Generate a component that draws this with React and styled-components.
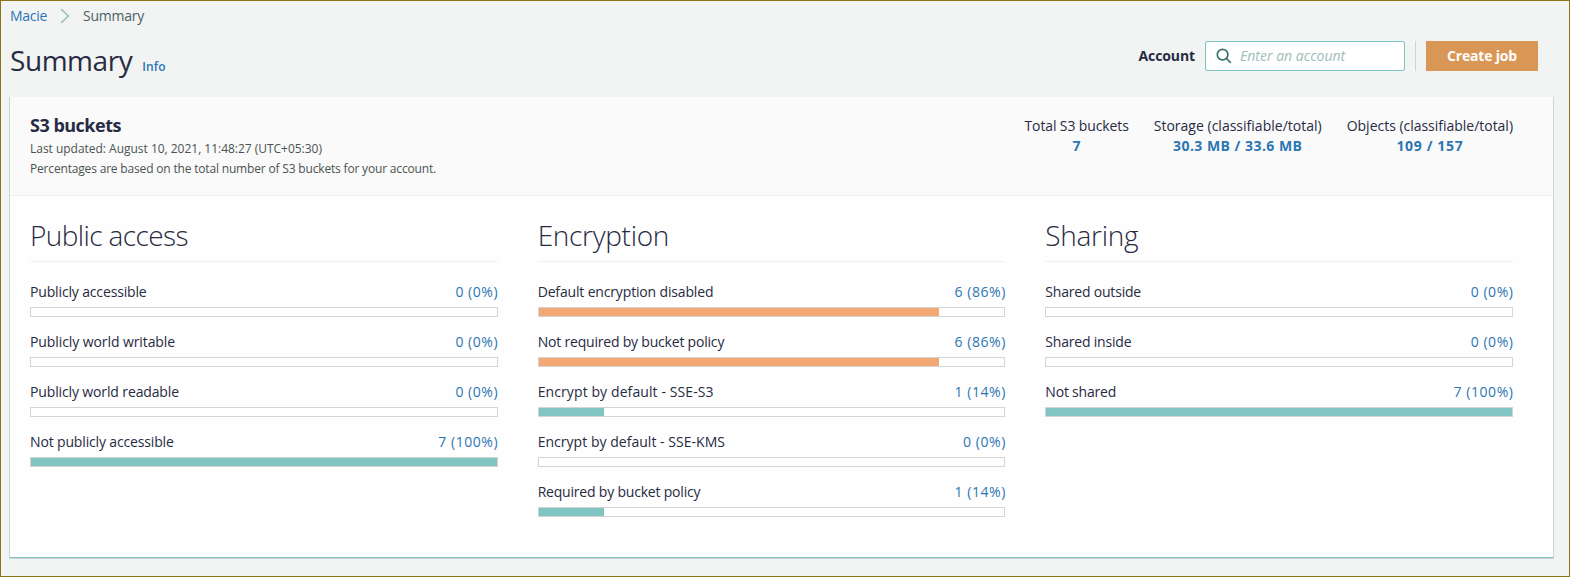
import React from "react";
import styled, { createGlobalStyle } from "styled-components";

const GlobalStyle = createGlobalStyle`
  *, *::before, *::after { box-sizing: border-box; }
  body {
    margin: 0;
    background: #f2f3f3;
    font-family: "Open Sans", "Noto Sans", sans-serif;
    font-size: 14px;
    line-height: 20px;
    color: #272b42;
  }
`;

const Page = styled.div`
  height: 577px;
  width: 1570px;
  border: 1px solid #8b7118;
  padding: 0 15px 0 8px;
  overflow: hidden;
`;

const Text = styled.span`
  white-space: nowrap;
  letter-spacing: ${(p) => p.$track || 0}px;
`;

const Breadcrumb = styled.nav`
  display: flex;
  align-items: center;
  height: 20px;
  margin-top: 5px;
  padding-left: 1px;
  svg { margin: 0 13px 0 13px; }
`;

const Crumb = styled(Text)`
  color: ${(p) => (p.$link ? "#2c76b3" : "#4a6166")};
`;

const TitleBar = styled.header`
  display: flex;
  justify-content: space-between;
  height: 71px;
  padding: 15px 16px 0 1px;
`;

const TitleGroup = styled.div`
  display: flex;
  align-items: baseline;
  height: 40px;
  line-height: 38px;
`;

const Title = styled.h1`
  margin: 0 10px 0 0;
  font-size: 28px;
  font-weight: 400;
  letter-spacing: -0.45px;
`;

const Info = styled(Text)`
  color: #2c76b3;
  font-size: 12px;
  font-weight: 600;
`;

const Actions = styled.div`
  display: flex;
  height: 30px;
`;

const AccountLabel = styled.label`
  font-weight: 700;
  line-height: 30px;
  margin-right: 10px;
  letter-spacing: -0.1px;
`;

const SearchBox = styled.div`
  display: flex;
  align-items: center;
  width: 200px;
  padding-left: 10px;
  background: #fff;
  border: 1px solid #7fc4c1;
  border-radius: 2px;
  color: #9cbdba;
  font-style: italic;
  svg { margin-right: 8px; }
`;

const Divider = styled.div`
  width: 1px;
  margin: 0 10px;
  background: #d0d3d3;
`;

const CreateButton = styled.button`
  width: 112px;
  height: 30px;
  padding: 0;
  border: 0;
  color: #fff;
  font: 700 14px/30px "Open Sans", sans-serif;
  letter-spacing: -0.2px;
  background: #da9655;
`;

const Card = styled.section`
  height: 462px;
  background: #fefefe;
  border: solid #d0d3d3;
  border-width: 0 1px 1px;
  box-shadow: inset 0 -1px #7fc4c1;
`;

const CardHeader = styled.div`
  display: flex;
  justify-content: space-between;
  height: 99px;
  padding: 18px 40px 0 20px;
  background: #fafafa;
  border-bottom: 1px solid #eef0f0;
`;

const CardTitle = styled.h2`
  margin: 0 0 4px;
  font-size: 18px;
  line-height: 20px;
  font-weight: 700;
  letter-spacing: -0.5px;
`;

const Note = styled.div`
  font-size: 12px;
  line-height: 20px;
  color: #4a5350;
`;

const Stats = styled.div`
  display: flex;
  gap: 25px;
  padding-top: 1px;
`;

const Stat = styled.div`
  display: flex;
  flex-direction: column;
  align-items: center;
`;

const StatValue = styled(Text)`
  color: #2c76b3;
  font-weight: 700;
`;

const Columns = styled.div`
  display: grid;
  grid-template-columns: repeat(3, 1fr);
  gap: 40px;
  padding: 20px 40px 0 20px;
`;

const ColumnTitle = styled.h3`
  margin: 0 0 20px;
  height: 46px;
  line-height: 38px;
  font-size: 28px;
  font-weight: 300;
  border-bottom: 1px solid #eff0f0;
  letter-spacing: ${(p) => p.$track}px;
`;

const Metric = styled.div`
  height: 50px;
`;

const MetricLine = styled.div`
  display: flex;
  justify-content: space-between;
  height: 25px;
`;

const MetricValue = styled(Text)`
  color: #2c76b3;
  margin-right: -0.5px;
`;

const Track = styled.div`
  height: 10px;
  border: 1px solid #d3d5d5;
  background: #fff;
`;

const Fill = styled.div`
  height: 100%;
  background: ${(p) => (p.$tone === "warn" ? "#f4a873" : "#81c5c3")};
`;

const Chevron = () => (
  <svg width="10" height="16" viewBox="0 0 10 16" fill="none" stroke="#94bfc1" strokeWidth="1.5">
    <path d="M1 1l7.3 7L1 15" />
  </svg>
);

const SearchIcon = () => (
  <svg width="16" height="16" viewBox="0 0 16 16" fill="none" stroke="#3d6e70" strokeWidth="1.7">
    <circle cx="6.6" cy="6.6" r="5.3" />
    <path d="M10.5 10.5l4.3 4.3" />
  </svg>
);

const stats = [
  { label: "Total S3 buckets", value: "7", track: -0.12, valueTrack: 0 },
  { label: "Storage (classifiable/total)", value: "30.3 MB / 33.6 MB", track: 0.01, valueTrack: 0.47 },
  { label: "Objects (classifiable/total)", value: "109 / 157", track: -0.02, valueTrack: 0.65 },
];

const groups = [
  {
    title: "Public access",
    track: -0.6,
    rows: [
      ["Publicly accessible", -0.15, "0 (0%)", 0],
      ["Publicly world writable", -0.09, "0 (0%)", 0],
      ["Publicly world readable", -0.13, "0 (0%)", 0],
      ["Not publicly accessible", -0.15, "7 (100%)", 100],
    ],
  },
  {
    title: "Encryption",
    track: -0.3,
    rows: [
      ["Default encryption disabled", -0.16, "6 (86%)", 86, "warn"],
      ["Not required by bucket policy", -0.2, "6 (86%)", 86, "warn"],
      ["Encrypt by default - SSE-S3", 0.1, "1 (14%)", 14],
      ["Encrypt by default - SSE-KMS", 0.03, "0 (0%)", 0],
      ["Required by bucket policy", -0.2, "1 (14%)", 14],
    ],
  },
  {
    title: "Sharing",
    track: -0.3,
    rows: [
      ["Shared outside", -0.2, "0 (0%)", 0],
      ["Shared inside", -0.2, "0 (0%)", 0],
      ["Not shared", -0.2, "7 (100%)", 100],
    ],
  },
];

export default function App() {
  return (
    <>
      <GlobalStyle />
      <Page>
        <Breadcrumb>
          <Crumb $link $track={-0.3}>Macie</Crumb>
          <Chevron />
          <Crumb $track={-0.25}>Summary</Crumb>
        </Breadcrumb>
        <TitleBar>
          <TitleGroup>
            <Title>Summary</Title>
            <Info $track={0.1}>Info</Info>
          </TitleGroup>
          <Actions>
            <AccountLabel>Account</AccountLabel>
            <SearchBox>
              <SearchIcon />
              <Text $track={0.02}>Enter an account</Text>
            </SearchBox>
            <Divider />
            <CreateButton>Create job</CreateButton>
          </Actions>
        </TitleBar>
        <Card>
          <CardHeader>
            <div>
              <CardTitle>S3 buckets</CardTitle>
              <Note><Text $track={-0.02}>Last updated: August 10, 2021, 11:48:27 (UTC+05:30)</Text></Note>
              <Note><Text $track={-0.175}>Percentages are based on the total number of S3 buckets for your account.</Text></Note>
            </div>
            <Stats>
              {stats.map((s) => (
                <Stat key={s.label}>
                  <Text $track={s.track}>{s.label}</Text>
                  <StatValue $track={s.valueTrack}>{s.value}</StatValue>
                </Stat>
              ))}
            </Stats>
          </CardHeader>
          <Columns>
            {groups.map((g) => (
              <div key={g.title}>
                <ColumnTitle $track={g.track}>{g.title}</ColumnTitle>
                {g.rows.map(([label, track, value, percent, tone]) => (
                  <Metric key={label}>
                    <MetricLine>
                      <Text $track={track}>{label}</Text>
                      <MetricValue $track={0.55}>{value}</MetricValue>
                    </MetricLine>
                    <Track>
                      <Fill $tone={tone} style={{ width: `${percent}%` }} />
                    </Track>
                  </Metric>
                ))}
              </div>
            ))}
          </Columns>
        </Card>
      </Page>
    </>
  );
}
